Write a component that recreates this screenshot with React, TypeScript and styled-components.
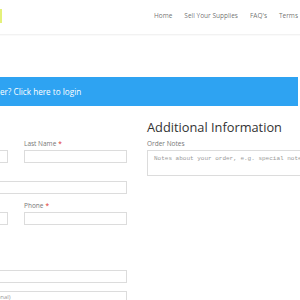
import styled, { createGlobalStyle } from "styled-components";

const GlobalStyle = createGlobalStyle`
    html, body {
        margin: 0;
        padding: 0;
        background: #fff;
        overflow: hidden;
    }
    body {
        font-family: "Open Sans", "Liberation Sans", sans-serif;
        color: #666;
    }
`

const Page = styled.div`
    width: 300px;
    height: 300px;
    overflow: hidden;
`

const Header = styled.div`
    height: 34px;
    border-bottom: 1px solid #f2f2f2;
    display: flex;
    align-items: center;
    justify-content: space-between;
    box-shadow: 0 1px 0 rgba(0, 0, 0, 0.02);
`

const Logo = styled.div`
    width: 2px;
    height: 14px;
    margin-top: -2px;
    background: #e4f17a;
`

const Nav = styled.div`
    display: flex;
    gap: 12px;
    margin-right: 2px;
    margin-top: -3px;
`

const NavItem = styled.a`
    font-size: 6.5px;
    color: rgba(0, 0, 0, 0.6);
    text-decoration: none;
    white-space: nowrap;
`

const InfoBar = styled.div`
    margin-top: 42px;
    height: 29px;
    margin-right: 2px;
    background: #2ea3f2;
    display: flex;
    align-items: center;
    overflow: hidden;
`

const InfoText = styled.span`
    color: #fff;
    font-size: 8.2px;
    white-space: nowrap;
    margin-left: -68px;
`

const Columns = styled.div`
    display: grid;
    grid-template-columns: 222px 222px;
    column-gap: 20px;
    margin-left: -95px;
    margin-top: 13px;
`

const Column = styled.div`
    display: flex;
    flex-direction: column;
`

const Heading = styled.h3`
    margin: 0 0 4px 0;
    font-size: 12.8px;
    line-height: 16px;
    font-weight: 400;
    color: #333;
    white-space: nowrap;
`

const Row = styled.div`
    display: flex;
    gap: 16px;
`

const Field = styled.div<{ $half?: boolean; $gap?: number }>`
    display: flex;
    flex-direction: column;
    gap: 2px;
    width: ${p => (p.$half ? "103px" : "100%")};
    margin-bottom: ${p => p.$gap ?? 7}px;
`

const Label = styled.label`
    font-size: 6.5px;
    line-height: 9px;
    color: #777;
    white-space: nowrap;
`

const Required = styled.span`
    color: #e02b27;
    margin-left: 2px;
`

const Input = styled.div<{ $spaced?: boolean }>`
    height: 13px;
    box-sizing: border-box;
    border: 1px solid #dcdcdc;
    background: #fff;
    font-size: 6px;
    line-height: 11px;
    color: #999;
    padding-left: 4px;
    white-space: nowrap;
    overflow: hidden;
    margin-top: ${p => (p.$spaced ? "6px" : "0")};
`

const Value = styled.div`
    font-size: 6.5px;
    line-height: 9px;
    color: #333;
    font-weight: 600;
`

const TextArea = styled.div`
    height: 26px;
    box-sizing: border-box;
    border: 1px solid #dcdcdc;
    padding: 4px 6px;
    font-family: "Liberation Mono", "DejaVu Sans Mono", monospace;
    font-size: 6px;
    color: #999;
    white-space: nowrap;
    overflow: hidden;
`

const FieldLabel = ({ text, required }: { text: string; required?: boolean }) => (
    <Label>
        {text}
        {required && <Required>*</Required>}
    </Label>
)

export default function App() {
    return (
        <Page>
            <GlobalStyle />
            <Header>
                <Logo />
                <Nav>
                    <NavItem>Home</NavItem>
                    <NavItem>Sell Your Supplies</NavItem>
                    <NavItem>FAQ's</NavItem>
                    <NavItem>Terms</NavItem>
                </Nav>
            </Header>
            <InfoBar>
                <InfoText>Returning customer? Click here to login</InfoText>
            </InfoBar>
            <Columns>
                <Column>
                    <Heading>Billing Details</Heading>
                    <Row>
                        <Field $half>
                            <FieldLabel text="First Name" required />
                            <Input />
                        </Field>
                        <Field $half>
                            <FieldLabel text="Last Name" required />
                            <Input />
                        </Field>
                    </Row>
                    <Field>
                        <FieldLabel text="Company Name" />
                        <Input />
                    </Field>
                    <Row>
                        <Field $half>
                            <FieldLabel text="Email Address" required />
                            <Input />
                        </Field>
                        <Field $half>
                            <FieldLabel text="Phone" required />
                            <Input />
                        </Field>
                    </Row>
                    <Field>
                        <FieldLabel text="Country" required />
                        <Value>United States (US)</Value>
                    </Field>
                    <Field>
                        <FieldLabel text="Address" required />
                        <Input>Street address</Input>
                        <Input $spaced>Apartment, suite, unit etc. (optional)</Input>
                    </Field>
                </Column>
                <Column>
                    <Heading>Additional Information</Heading>
                    <Field>
                        <FieldLabel text="Order Notes" />
                        <TextArea>Notes about your order, e.g. special notes for delivery.</TextArea>
                    </Field>
                </Column>
            </Columns>
        </Page>
    )
}
